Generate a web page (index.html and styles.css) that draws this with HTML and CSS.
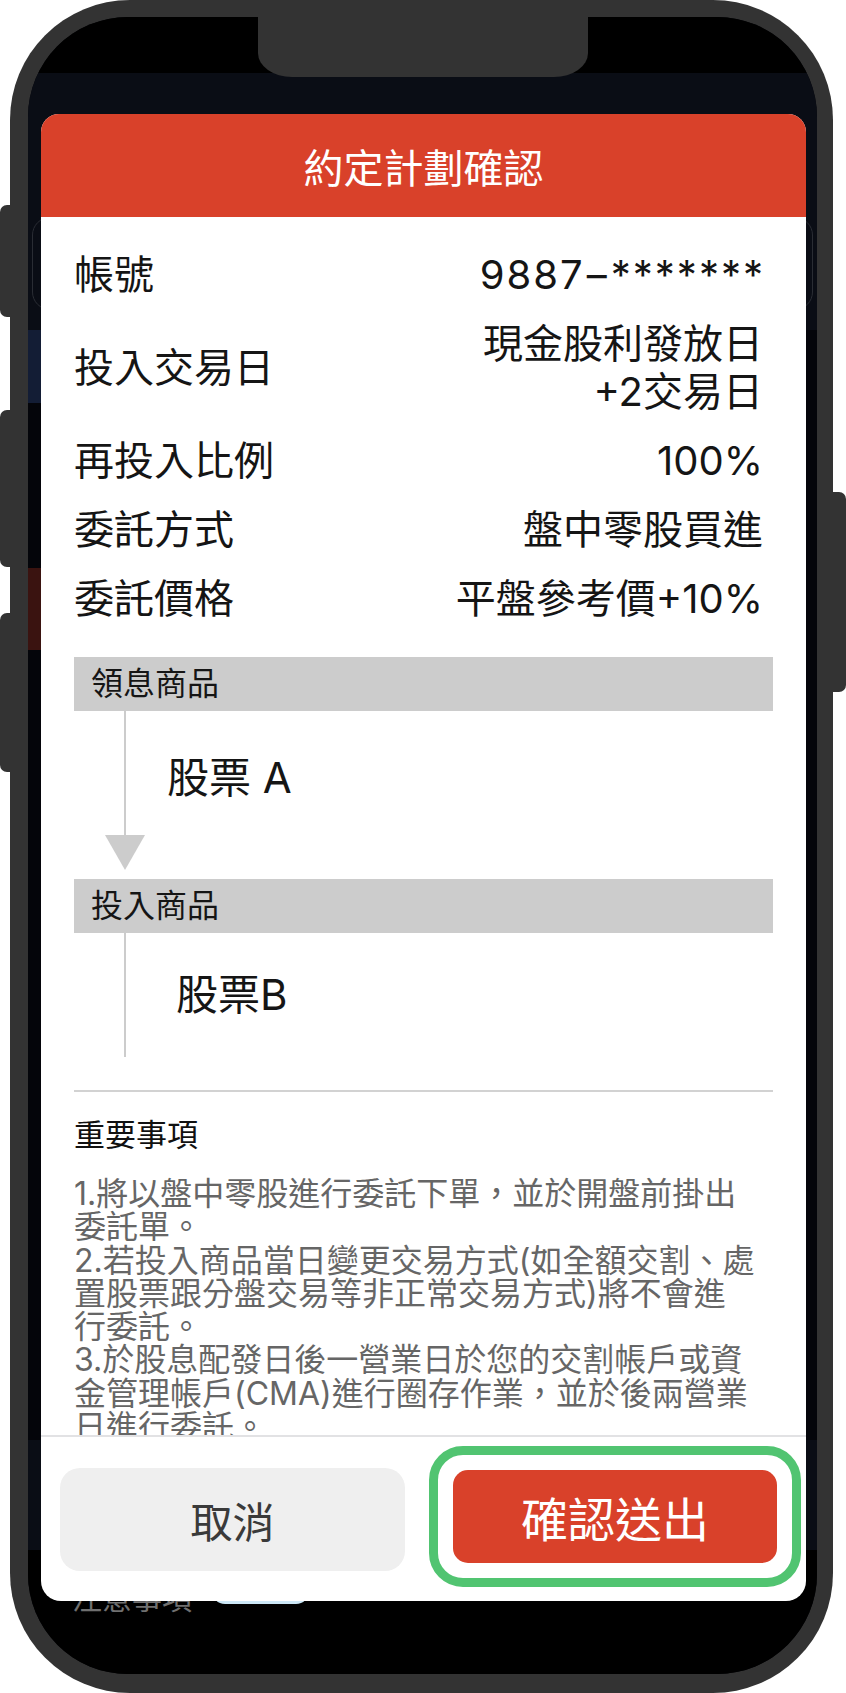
FILE: index.html
```html
<!DOCTYPE html>
<html lang="zh-Hant">
<head>
    <meta charset="UTF-8">
    <meta name="viewport" content="width=device-width, initial-scale=1.0">
    <title>約定計劃確認</title>
    <link rel="stylesheet" href="styles.css">
</head>
<body>
    <div class="phone">
        <span class="side-btn side-btn-1"></span>
        <span class="side-btn side-btn-2"></span>
        <span class="side-btn side-btn-3"></span>
        <span class="side-btn side-btn-r"></span>

        <div class="screen">
            <div class="notch"></div>

            <!-- dimmed app behind the dialog -->
            <div class="app">
                <div class="app-status"></div>
                <div class="app-head">
                    <div class="app-card"></div>
                </div>
                <div class="app-tab"></div>
                <div class="app-gap"></div>
                <div class="app-alert"></div>
                <div class="app-fill"></div>
                <div class="app-bar"></div>
                <div class="app-foot">
                    <span class="app-note">注意事項</span>
                    <span class="app-pill"></span>
                </div>
            </div>

            <div class="modal">
                <div class="modal-head">約定計劃確認</div>

                <div class="modal-body">
                    <div class="row">
                        <span class="label">帳號</span>
                        <span class="val acct">9887<span class="dash">–</span><span class="stars">*******</span></span>
                    </div>
                    <div class="row">
                        <span class="label">投入交易日</span>
                        <span class="val">現金股利發放日<br>+2交易日</span>
                    </div>
                    <div class="row">
                        <span class="label">再投入比例</span>
                        <span class="val">100%</span>
                    </div>
                    <div class="row">
                        <span class="label">委託方式</span>
                        <span class="val">盤中零股買進</span>
                    </div>
                    <div class="row">
                        <span class="label">委託價格</span>
                        <span class="val">平盤參考價+10%</span>
                    </div>

                    <div class="section-bar first">領息商品</div>
                    <div class="flow flow-from">
                        <div class="track">
                            <div class="track-line"></div>
                            <div class="track-arrow"></div>
                        </div>
                        <div class="stock stock-a">股票 A</div>
                    </div>

                    <div class="section-bar">投入商品</div>
                    <div class="flow flow-to">
                        <div class="track">
                            <div class="track-line"></div>
                        </div>
                        <div class="stock stock-b">股票B</div>
                    </div>

                    <div class="divider"></div>

                    <h2 class="notes-title">重要事項</h2>
                    <div class="notes">
                        <div>1.將以盤中零股進行委託下單，並於開盤前掛出</div>
                        <div>委託單。</div>
                        <div>2.若投入商品當日變更交易方式(如全額交割、處</div>
                        <div>置股票跟分盤交易等非正常交易方式)將不會進</div>
                        <div>行委託。</div>
                        <div>3.於股息配發日後一營業日於您的交割帳戶或資</div>
                        <div>金管理帳戶(CMA)進行圈存作業，並於後兩營業</div>
                        <div>日進行委託。</div>
                    </div>
                </div>

                <div class="modal-foot">
                    <button class="cancel-btn">取消</button>
                    <div class="confirm-wrap">
                        <button class="confirm-btn">確認送出</button>
                    </div>
                </div>
            </div>
        </div>
    </div>
</body>
</html>
```

FILE: styles.css
```css
* {
    margin: 0;
    padding: 0;
    box-sizing: border-box;
}

body {
    background: #ffffff;
    font-family: Inter, "Noto Sans CJK TC", sans-serif;
}

/* device frame */
.phone {
    position: relative;
    width: 823px;
    height: 1693px;
    margin-left: 10px;
    padding: 17px 16px 19px 18px;
    background: #333333;
    border-radius: 120px;
}

.side-btn {
    position: absolute;
    width: 14px;
    background: #333333;
}

.side-btn-1,
.side-btn-2,
.side-btn-3 {
    left: -10px;
    border-radius: 7px 0 0 7px;
}

.side-btn-1 { top: 205px; height: 112px; }
.side-btn-2 { top: 410px; height: 157px; }
.side-btn-3 { top: 613px; height: 159px; }

.side-btn-r {
    right: -13px;
    top: 492px;
    height: 200px;
    border-radius: 0 7px 7px 0;
}

.screen {
    position: relative;
    height: 100%;
    border-radius: 100px;
    overflow: hidden;
    background: #04050a;
}

.notch {
    position: absolute;
    top: 0;
    left: 230px;
    width: 330px;
    height: 60px;
    background: #333333;
    border-radius: 0 0 34px 34px / 0 0 24px 24px;
    z-index: 2;
}

/* app under the overlay */
.app {
    display: flex;
    flex-direction: column;
    height: 100%;
}

.app-status {
    height: 56px;
    background: #000000;
}

.app-head {
    height: 257px;
    padding: 144px 4px 0;
    background: #0a0d15;
}

.app-card {
    height: 93px;
    border: 1.5px solid #2a2d34;
    border-radius: 18px;
}

.app-tab {
    height: 73px;
    width: 50%;
    background: #131d35;
}

.app-gap {
    height: 165px;
}

.app-alert {
    height: 82px;
    width: 50%;
    background: #3a1310;
}

.app-fill {
    flex: 1;
}

.app-bar {
    height: 110px;
    background: #0a0d15;
}

.app-foot {
    height: 124px;
    display: flex;
    align-items: flex-start;
    gap: 20px;
    padding: 28px 0 0 44px;
    background: #000000;
}

.app-note {
    font-size: 30px;
    line-height: 40px;
    color: #707070;
}

.app-pill {
    width: 97px;
    height: 26px;
    border-radius: 14px;
    background: #cde8f7;
}

/* dialog */
.modal {
    position: absolute;
    top: 97px;
    left: 13px;
    width: 765px;
    height: 1487px;
    display: flex;
    flex-direction: column;
    background: #ffffff;
    border-radius: 18px 18px 20px 20px;
    overflow: hidden;
    z-index: 1;
}

.modal-head {
    height: 103px;
    flex: none;
    display: flex;
    align-items: center;
    justify-content: center;
    background: #d9412a;
    color: #ffffff;
    font-size: 40px;
}

.modal-body {
    flex: 1;
    overflow: hidden;
    padding: 23px 33px 0;
    color: #151515;
}

.row {
    display: flex;
    justify-content: space-between;
    align-items: center;
    padding: 10.5px 10px 10.5px 0;
    font-size: 40px;
    line-height: 48px;
}

.label {
    white-space: nowrap;
}

.val {
    text-align: right;
    white-space: nowrap;
}

.acct {
    letter-spacing: 2px;
    margin-right: -2px;
}

.dash {
    margin: 0 2px;
}

.section-bar {
    height: 54px;
    padding-left: 17px;
    background: #cccccc;
    font-size: 32px;
    line-height: 54px;
}

.section-bar.first {
    margin-top: 24px;
}

.flow {
    display: flex;
    align-items: flex-start;
}

.flow-from {
    height: 168px;
}

.flow-to {
    height: 124px;
}

.track {
    width: 40px;
    margin-left: 31px;
    display: flex;
    flex-direction: column;
    align-items: center;
}

.track-line {
    width: 2px;
    height: 124px;
    background: #cccccc;
}

.track-arrow {
    width: 0;
    height: 0;
    border-left: 20px solid transparent;
    border-right: 20px solid transparent;
    border-top: 35px solid #cccccc;
}

.stock {
    font-size: 42px;
    line-height: 50px;
}

.stock-a {
    margin: 42px 0 0 22px;
}

.stock-b {
    margin: 37px 0 0 31px;
}

.divider {
    height: 2px;
    margin-top: 33px;
    background: #d2d2d2;
}

.notes-title {
    margin-top: 23px;
    font-size: 31px;
    line-height: 40px;
    font-weight: 400;
    color: #111111;
}

.notes {
    margin-top: 22px;
    font-size: 32px;
    line-height: 33.3px;
    color: #666666;
    white-space: nowrap;
}

.modal-foot {
    height: 166px;
    flex: none;
    display: flex;
    align-items: flex-start;
    gap: 48px;
    padding: 0 29px 0 19px;
    border-top: 2px solid #e2e2e4;
}

button {
    border: none;
    font-family: inherit;
    cursor: pointer;
}

.cancel-btn {
    width: 345px;
    height: 103px;
    margin-top: 31px;
    background: #efefef;
    border-radius: 20px;
    color: #3a3a3a;
    font-size: 42px;
}

.confirm-wrap {
    position: relative;
    width: 324px;
    height: 93px;
    margin-top: 33px;
}

/* highlight ring drawn around the submit button */
.confirm-wrap::after {
    content: "";
    position: absolute;
    inset: -24px;
    border: 9px solid #51c471;
    border-radius: 34px;
    pointer-events: none;
}

.confirm-btn {
    width: 100%;
    height: 100%;
    background: #d9412a;
    border-radius: 15px;
    color: #ffffff;
    font-size: 47px;
}
```
